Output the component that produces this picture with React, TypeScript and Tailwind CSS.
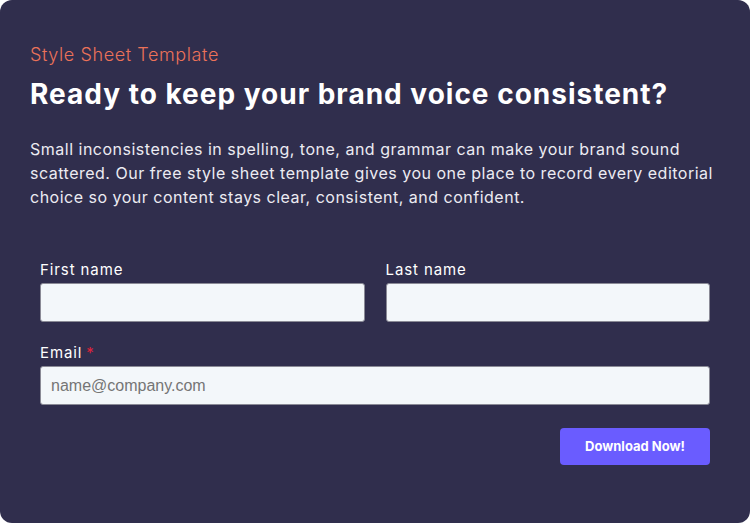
import React from "react"

const inputCls =
    "w-full h-[39px] rounded-[3px] border border-[#8a8a96] bg-[#f3f7fa] px-[10px] text-[16px] text-[#333] placeholder:text-[#757575] outline-none [font-family:'Liberation_Sans',Arial,sans-serif]"

const Field: React.FC<{ label: string; required?: boolean; placeholder?: string }> = ({ label, required, placeholder }) => {
    return (
        <div className="flex flex-col">
            <label className="text-[15px] leading-[20px] text-white mb-[3px] tracking-[0.9px]">
                {label}
                {required && <span className="text-[#e0213a] ml-[4px]">*</span>}
            </label>
            <input className={inputCls} placeholder={placeholder} />
        </div>
    )
}

export default function App() {
    return (
        <div className="w-[750px] h-[523px] bg-white">
            <div className="w-full h-full rounded-[12px] bg-[#302e4d] px-[30px] pt-[43px] [font-family:Inter,sans-serif]">
                <p className="text-[18px] leading-[24px] text-[#ec7259] font-light tracking-[0.6px]">Style Sheet Template</p>
                <h2 className="mt-[11px] text-[28px] leading-[32px] font-bold text-white tracking-[1px]">
                    Ready to keep your brand voice consistent?
                </h2>
                <p className="mt-[27px] text-[16px] leading-[24px] text-[#ecebf2] tracking-[0.5px]">
                    Small inconsistencies in spelling, tone, and grammar can make your brand sound scattered. Our free style sheet template gives you one place to record every editorial choice so your content stays clear, consistent, and confident.
                </p>

                <form className="mt-[51px] px-[10px]">
                    <div className="grid grid-cols-2 gap-x-[21px]">
                        <Field label="First name" />
                        <Field label="Last name" />
                    </div>
                    <div className="mt-[21px]">
                        <Field label="Email" required placeholder="name@company.com" />
                    </div>
                    <div className="flex justify-end mt-[23px]">
                        <button
                            type="button"
                            className="w-[150px] h-[37px] rounded-[4px] bg-[#6a5cff] text-white text-[13px] font-bold"
                        >
                            Download Now!
                        </button>
                    </div>
                </form>
            </div>
        </div>
    )
}
